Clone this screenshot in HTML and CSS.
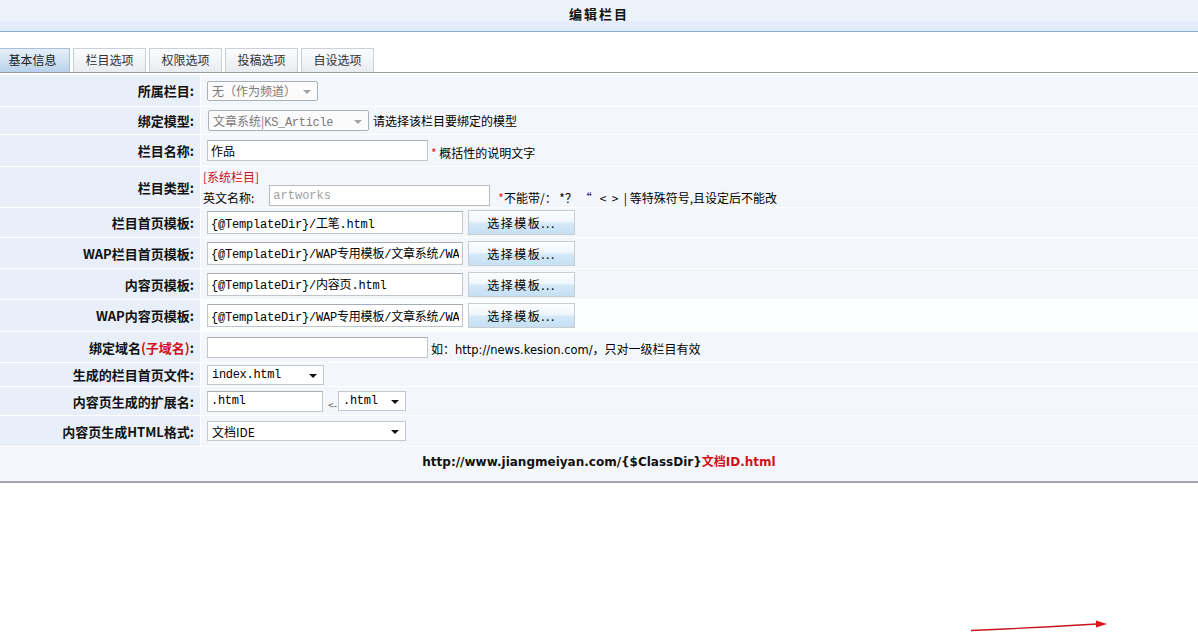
FILE: index.html
```html
<!DOCTYPE html>
<html lang="zh-CN">
<head>
<meta charset="utf-8">
<title>编辑栏目</title>
<link rel="stylesheet" href="styles.css">
</head>
<body>
<div class="header"><span class="title">编辑栏目</span></div>
<div class="tabbar">
  <div class="tab active first">基本信息</div>
  <div class="tab">栏目选项</div>
  <div class="tab">权限选项</div>
  <div class="tab">投稿选项</div>
  <div class="tab">自设选项</div>
</div>
<div class="form">
  <div class="row h31">
    <div class="label">所属栏目:</div>
    <div class="value">
      <div class="select disabled w111"><span class="sel-text">无（作为频道）</span><i class="arrow gray"></i></div>
    </div>
  </div>
  <div class="row h27">
    <div class="label">绑定模型:</div>
    <div class="value">
      <div class="select disabled w161 ml1"><span class="sel-text">文章系统|<span class="mono">KS_Article</span></span><i class="arrow gray"></i></div>
      <span class="note">请选择该栏目要绑定的模型</span>
    </div>
  </div>
  <div class="row h31">
    <div class="label">栏目名称:</div>
    <div class="value">
      <input class="input w221 name-input" type="text" value="作品">
      <span class="note low"><span class="star">*</span> 概括性的说明文字</span>
    </div>
  </div>
  <div class="row h40">
    <div class="label">栏目类型:</div>
    <div class="value col">
      <div class="sys">[系统栏目]</div>
      <div class="enline">
        <span class="en-label">英文名称:</span>
        <input class="input w221 dis-input" type="text" value="artworks" disabled>
        <span class="note low2"><span class="star">*</span>不能带/： *？ “ &nbsp;&nbsp;&lt;&nbsp;&nbsp;&gt;&nbsp;&nbsp;|&nbsp;等特殊符号,且设定后不能改</span>
      </div>
    </div>
  </div>
  <div class="row h29">
    <div class="label">栏目首页模板:</div>
    <div class="value">
      <input class="input tpl" type="text" value="{@TemplateDir}/工笔.html">
      <button class="btn" type="button">选择模板...</button>
    </div>
  </div>
  <div class="row h30">
    <div class="label">WAP栏目首页模板:</div>
    <div class="value">
      <input class="input tpl" type="text" value="{@TemplateDir}/WAP专用模板/文章系统/WAP栏目页.html">
      <button class="btn" type="button">选择模板...</button>
    </div>
  </div>
  <div class="row h30">
    <div class="label">内容页模板:</div>
    <div class="value">
      <input class="input tpl" type="text" value="{@TemplateDir}/内容页.html">
      <button class="btn" type="button">选择模板...</button>
    </div>
  </div>
  <div class="row h31">
    <div class="label">WAP内容页模板:</div>
    <div class="value white">
      <input class="input tpl" type="text" value="{@TemplateDir}/WAP专用模板/文章系统/WAP内容页.html">
      <button class="btn" type="button">选择模板...</button>
    </div>
  </div>
  <div class="row h30">
    <div class="label">绑定域名<span class="red">(子域名)</span>:</div>
    <div class="value">
      <input class="input w221" type="text" value="">
      <span class="note low">如：<span class="url">http://news.kesion.com/</span>，只对一级栏目有效</span>
    </div>
  </div>
  <div class="row h23">
    <div class="label">生成的栏目首页文件:</div>
    <div class="value">
      <div class="select w117"><span class="sel-text mono">index.html</span><i class="arrow"></i></div>
    </div>
  </div>
  <div class="row h28">
    <div class="label">内容页生成的扩展名:</div>
    <div class="value">
      <input class="input w116 mono-input" type="text" value=".html">
      <span class="lt">&lt;-</span>
      <div class="select w68"><span class="sel-text mono">.html</span><i class="arrow"></i></div>
    </div>
  </div>
  <div class="row h30">
    <div class="label">内容页生成HTML格式:</div>
    <div class="value">
      <div class="select w199"><span class="sel-text">文档IDE</span><i class="arrow"></i></div>
    </div>
  </div>
</div>
<div class="footer-row">http://www.jiangmeiyan.com/{$ClassDir}<span class="red">文档ID.html</span></div>
<svg class="red-arrow" width="150" height="20" viewBox="0 0 150 20" aria-hidden="true">
  <polyline points="6,15.5 40,14 80,12 132,9" fill="none" stroke="#c8141c" stroke-width="1.3"/>
  <polygon points="131,5.5 142,9 131,12.5" fill="#e0141c"/>
</svg>
</body>
</html>
```

FILE: styles.css
```css
* { box-sizing: border-box; }

body {
  margin: 0;
  font: 12px "Noto Sans CJK SC", "Liberation Sans", sans-serif;
  color: #000;
  background: #fff;
  position: relative;
  min-height: 637px;
  overflow: hidden;
}

.header {
  height: 32px;
  border-bottom: 1px solid #88b0c5;
  background: linear-gradient(#edf3fb 0, #edf3fb 20px, #e4eefa 22px, #e1ecf9 31px);
  text-align: center;
}

.title {
  font-weight: bold;
  font-size: 13px;
  letter-spacing: 2px;
  line-height: 28px;
  color: #111;
}

.tabbar {
  height: 41px;
  display: flex;
  align-items: flex-end;
  gap: 3px;
  border-bottom: 1px solid #9b9b9b;
}

.tab {
  width: 73px;
  height: 24px;
  border: 1px solid #ccd0d4;
  border-bottom: none;
  background: linear-gradient(#fbfcfd, #e9ecef);
  color: #333;
  text-align: center;
  line-height: 22px;
  font-size: 12px;
}

.tab.first { width: 70px; border-left: none; padding-right: 4px; }

.tab.active {
  border-color: #a9c0d6;
  background: linear-gradient(#e4eef8 0%, #d2e2f2 50%, #b7d0e9 100%);
  color: #222;
}

.form { margin-top: 2px; }

.row {
  display: grid;
  grid-template-columns: 200px 1fr;
  column-gap: 1px;
  margin-bottom: 1px;
}

.h23 { height: 23px; }
.h27 { height: 27px; }
.h28 { height: 28px; }
.h29 { height: 29px; }
.h30 { height: 30px; }
.h31 { height: 31px; }
.h40 { height: 40px; }

.label {
  background: #e8eff8;
  font-weight: bold;
  font-size: 13px;
  display: flex;
  align-items: center;
  justify-content: flex-end;
  padding-right: 6px;
  color: #111;
  white-space: nowrap;
}

.value {
  background: #f3f7fc;
  display: flex;
  align-items: center;
  padding-left: 6px;
  white-space: nowrap;
}

.value.white { background: #fdfeff; }

.value.col {
  flex-direction: column;
  align-items: flex-start;
  justify-content: center;
  padding-left: 2px;
}

.red { color: #d0121a; }

.star { color: #e0141c; }

.note { margin-left: 4px; color: #000; }
.note.low { margin-left: 3px; padding-top: 3px; }
.note.low2 { margin-left: 8px; padding-top: 4px; }

.mono { font-family: "Liberation Mono", "Noto Sans CJK SC", monospace; font-size: 12px; letter-spacing: -0.3px; }

.select {
  height: 20px;
  border: 1px solid #c5c9ce;
  background: #fff;
  display: flex;
  align-items: center;
  justify-content: space-between;
  padding: 0 6px 0 4px;
  color: #000;
}

.select.disabled {
  border-color: #a9b0b8;
  border-radius: 2px;
  color: #7a7a7a;
  background: #fbfbfb;
}

.ml1 { margin-left: 1px; height: 21px; }

.w111 { width: 111px; }
.w161 { width: 161px; }
.w117 { width: 117px; }
.w68 { width: 68px; }
.w199 { width: 199px; }
.w221 { width: 221px; }
.w116 { width: 116px; }

.sel-text { overflow: hidden; white-space: nowrap; }

.arrow {
  display: inline-block;
  width: 0;
  height: 0;
  border-left: 4px solid transparent;
  border-right: 4px solid transparent;
  border-top: 4px solid #111;
  margin-top: 2px;
  flex: none;
}

.arrow.gray { border-top-color: #a0a4a8; }

.input {
  height: 21px;
  border: 1px solid #c2c5c9;
  border-top-color: #a9acb0;
  background: #fff;
  font: 12px "Noto Sans CJK SC", "Liberation Sans", sans-serif;
  color: #000;
  padding: 0 3px;
  margin: 0;
  outline: none;
}

.name-input { height: 21px; }

.dis-input {
  font-family: "Liberation Mono", monospace;
  font-size: 12px;
  color: #a0a0a0;
  border-color: #b9bcc0;
  background: #fff;
  margin-left: 15px;
}

.mono-input {
  font-family: "Liberation Mono", "Noto Sans CJK SC", monospace;
  font-size: 12px;
  letter-spacing: -0.3px;
}

.tpl {
  width: 256px;
  height: 23px;
  font-family: "Liberation Mono", "Noto Sans CJK SC", monospace;
  font-size: 12px;
  letter-spacing: -0.2px;
  padding: 0 3px;
}

.btn {
  width: 107px;
  height: 25px;
  margin-left: 5px;
  border: 1px solid #c9cdd1;
  background: linear-gradient(#fdfeff 0%, #eef6fc 45%, #d3e8f7 55%, #c5e0f4 100%);
  font: 12px "Noto Sans CJK SC", "Liberation Sans", sans-serif;
  letter-spacing: 1.5px;
  color: #000;
  padding: 0;
}

.sys { color: #c8141c; line-height: 16px; margin-top: 1px; }

.enline { display: flex; align-items: center; }

.en-label { color: #000; padding-top: 3px; }

.url { font-family: "DejaVu Sans", "Liberation Sans", sans-serif; font-size: 11.5px; }

.lt {
  font-size: 10px;
  color: #555;
  margin: 0 1px 0 5px;
  padding-top: 7px;
}

.footer-row {
  height: 36px;
  background: #f3f7fc;
  border-bottom: 2px solid #a3a6a9;
  text-align: center;
  line-height: 30px;
  font-family: "DejaVu Sans", "Noto Sans CJK SC", sans-serif;
  font-size: 12px;
  font-weight: bold;
  color: #111;
}

.red-arrow {
  position: absolute;
  left: 965px;
  top: 615px;
}
```
